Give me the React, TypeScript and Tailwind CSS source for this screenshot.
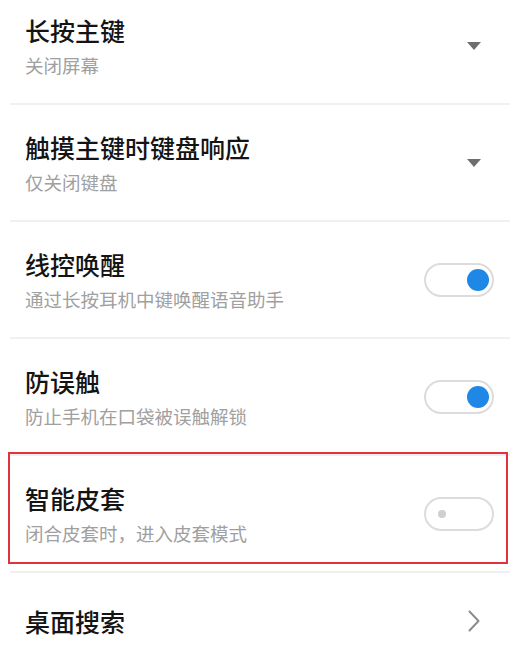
import React from "react";

const font = { fontFamily: '"Noto Sans CJK SC", "Noto Sans", sans-serif' };

function Triangle() {
  return (
    <svg width="14" height="8" viewBox="0 0 14 8" className="mr-[13px]">
      <polygon points="0,0 14,0 7,8" fill="#6e6e6e" />
    </svg>
  );
}

function Chevron() {
  return (
    <svg width="12" height="22" viewBox="0 0 12 22" className="mr-[14px]">
      <polyline points="1.5,1.5 10.5,11 1.5,20.5" fill="none" stroke="#8c8c8c" strokeWidth="2" strokeLinecap="round" strokeLinejoin="round" />
    </svg>
  );
}

function ToggleOn() {
  return (
    <div className="w-[70px] h-[34px] rounded-full border-2 border-[#dcdcdc] bg-white flex items-center justify-end pr-[3px]">
      <div className="w-[22px] h-[22px] rounded-full bg-[#1f87e6]" />
    </div>
  );
}

function ToggleOff() {
  return (
    <div className="w-[70px] h-[34px] rounded-full border-2 border-[#dcdcdc] bg-white flex items-center pl-[12px]">
      <div className="w-[8px] h-[8px] rounded-full bg-[#cfcfcf]" />
    </div>
  );
}

function Row({
  title,
  sub,
  right,
  last,
  height = "h-[117px]",
  children,
}: {
  title: string;
  sub?: string;
  right: React.ReactNode;
  last?: boolean;
  height?: string;
  children?: React.ReactNode;
}) {
  return (
    <div className={`relative mx-[10px] ${height} flex items-center pl-[15px] pr-[16px] ${last ? "" : "border-b-2 border-[#f0f0f0]"}`}>
      <div className="flex-1 flex flex-col">
        <div className="text-[25px] leading-[32px] font-medium text-[#141414]">{title}</div>
        {sub && <div className="text-[18.5px] leading-[24px] text-[#a0a0a0] mt-[7px]">{sub}</div>}
      </div>
      {right}
      {children}
    </div>
  );
}

export default function App() {
  return (
    <div className="w-[520px] h-[656px] overflow-hidden bg-white" style={font}>
      <div className="flex flex-col mt-[-12px]">
        <Row title="长按主键" sub="关闭屏幕" right={<Triangle />} />
        <Row title="触摸主键时键盘响应" sub="仅关闭键盘" right={<Triangle />} />
        <Row title="线控唤醒" sub="通过长按耳机中键唤醒语音助手" right={<ToggleOn />} />
        <Row title="防误触" sub="防止手机在口袋被误触解锁" right={<ToggleOn />} />
        <Row title="智能皮套" sub="闭合皮套时，进入皮套模式" right={<ToggleOff />}>
          <div className="absolute left-[-2px] right-[2px] top-[-4px] bottom-[7px] border-2 border-[#e2323a] pointer-events-none" />
        </Row>
        <Row title="桌面搜索" right={<Chevron />} last height="h-[96px]" />
      </div>
    </div>
  );
}
